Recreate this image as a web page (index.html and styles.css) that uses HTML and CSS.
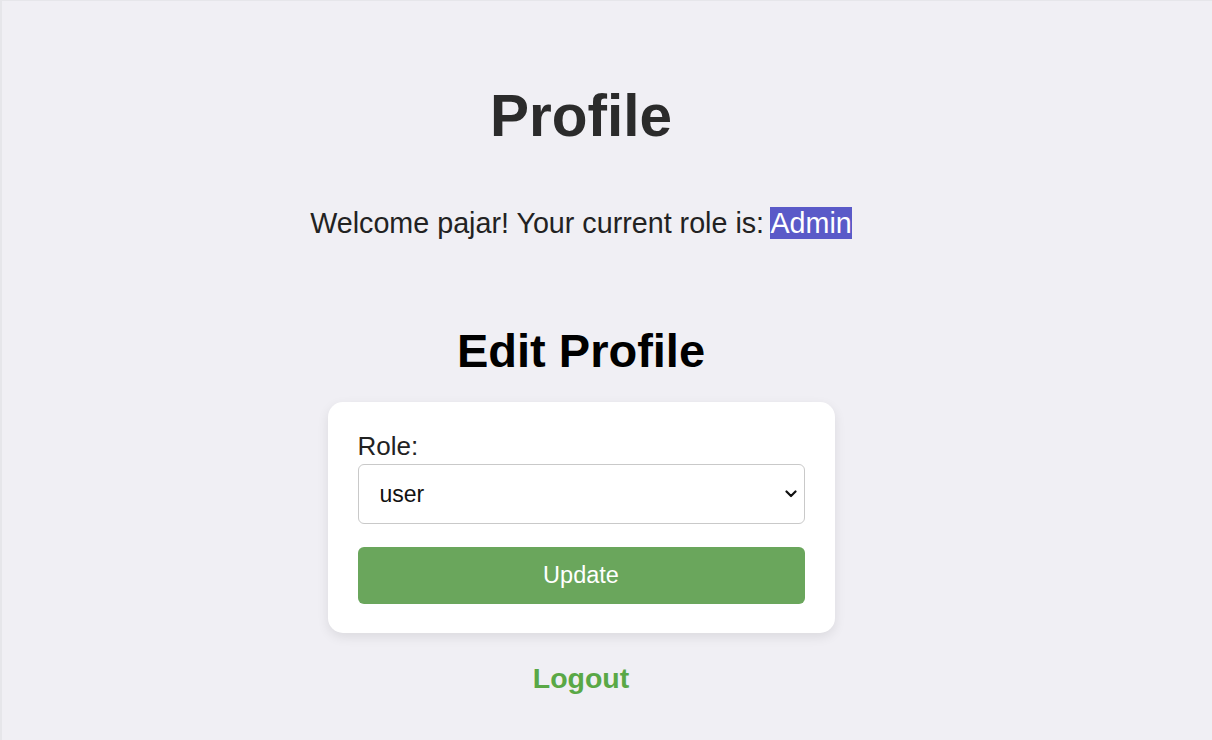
FILE: index.html
```html
<!DOCTYPE html>
<html lang="en">
<head>
<meta charset="utf-8">
<title>Profile</title>
<link rel="stylesheet" href="styles.css">
</head>
<body>
<main class="page">
  <h1 class="title">Profile</h1>
  <p class="welcome">Welcome pajar! Your current role is: <span class="selected">Admin</span></p>
  <h2 class="subtitle">Edit Profile</h2>
  <form class="card">
    <label class="label" for="role">Role:</label>
    <div class="select-wrap">
      <select id="role" class="select">
        <option>user</option>
        <option>admin</option>
      </select>
      <svg class="chevron" width="12" height="8" viewBox="0 0 12 8"><path d="M1.5 1.5 L6 6 L10.5 1.5" fill="none" stroke="#111" stroke-width="2.2" stroke-linecap="round" stroke-linejoin="round"/></svg>
    </div>
    <button type="button" class="button">Update</button>
  </form>
  <a class="logout" href="#">Logout</a>
</main>
</body>
</html>
```

FILE: styles.css
```css
html, body {
  margin: 0;
  padding: 0;
}
body {
  background: #f0eff4;
  font-family: "Liberation Sans", Arial, sans-serif;
  width: 1212px;
  height: 740px;
  overflow: hidden;
  box-sizing: border-box;
  border-top: 1px solid #e6e6ea;
  border-left: 2px solid #e6e6ea;
}
.page {
  width: 1158px;
  display: flex;
  flex-direction: column;
  align-items: center;
  padding-top: 81px;
}
.title {
  margin: 0;
  font-size: 58.5px;
  line-height: 1.15;
  font-weight: 700;
  color: #2b2b2b;
}
.welcome {
  margin: 58px 0 0;
  font-size: 28.7px;
  line-height: 1.15;
  color: #222;
}
.selected {
  background: #5a5ac8;
  color: #fff;
}
.subtitle {
  margin: 84px 0 0;
  font-size: 47px;
  line-height: 1.15;
  font-weight: 700;
  color: #000;
}
.card {
  margin-top: 24px;
  width: 447px;
  padding: 30px 30px 29px;
  background: #fff;
  border-radius: 15px;
  box-shadow: 0 4px 12px rgba(0, 0, 0, 0.09);
  display: flex;
  flex-direction: column;
}
.label {
  display: block;
  font-size: 26px;
  line-height: 1.15;
  color: #222;
  margin-bottom: 2px;
}
.select-wrap {
  position: relative;
}
.select {
  appearance: none;
  -webkit-appearance: none;
  width: 100%;
  height: 60px;
  box-sizing: border-box;
  border: 1.5px solid #c9c9c9;
  border-radius: 6px;
  background: #fff;
  font-family: inherit;
  font-size: 23px;
  color: #111;
  padding: 0 20px 0 21px;
  outline: none;
}
.chevron {
  position: absolute;
  right: 8px;
  top: 26px;
}
.button {
  margin-top: 23px;
  height: 57px;
  border: none;
  border-radius: 6px;
  background: #6aa65c;
  color: #fff;
  font-family: inherit;
  font-size: 23.5px;
  cursor: pointer;
}
.logout {
  margin-top: 29px;
  font-size: 28.5px;
  line-height: 1.15;
  font-weight: 700;
  color: #5aa846;
  text-decoration: none;
}
```
